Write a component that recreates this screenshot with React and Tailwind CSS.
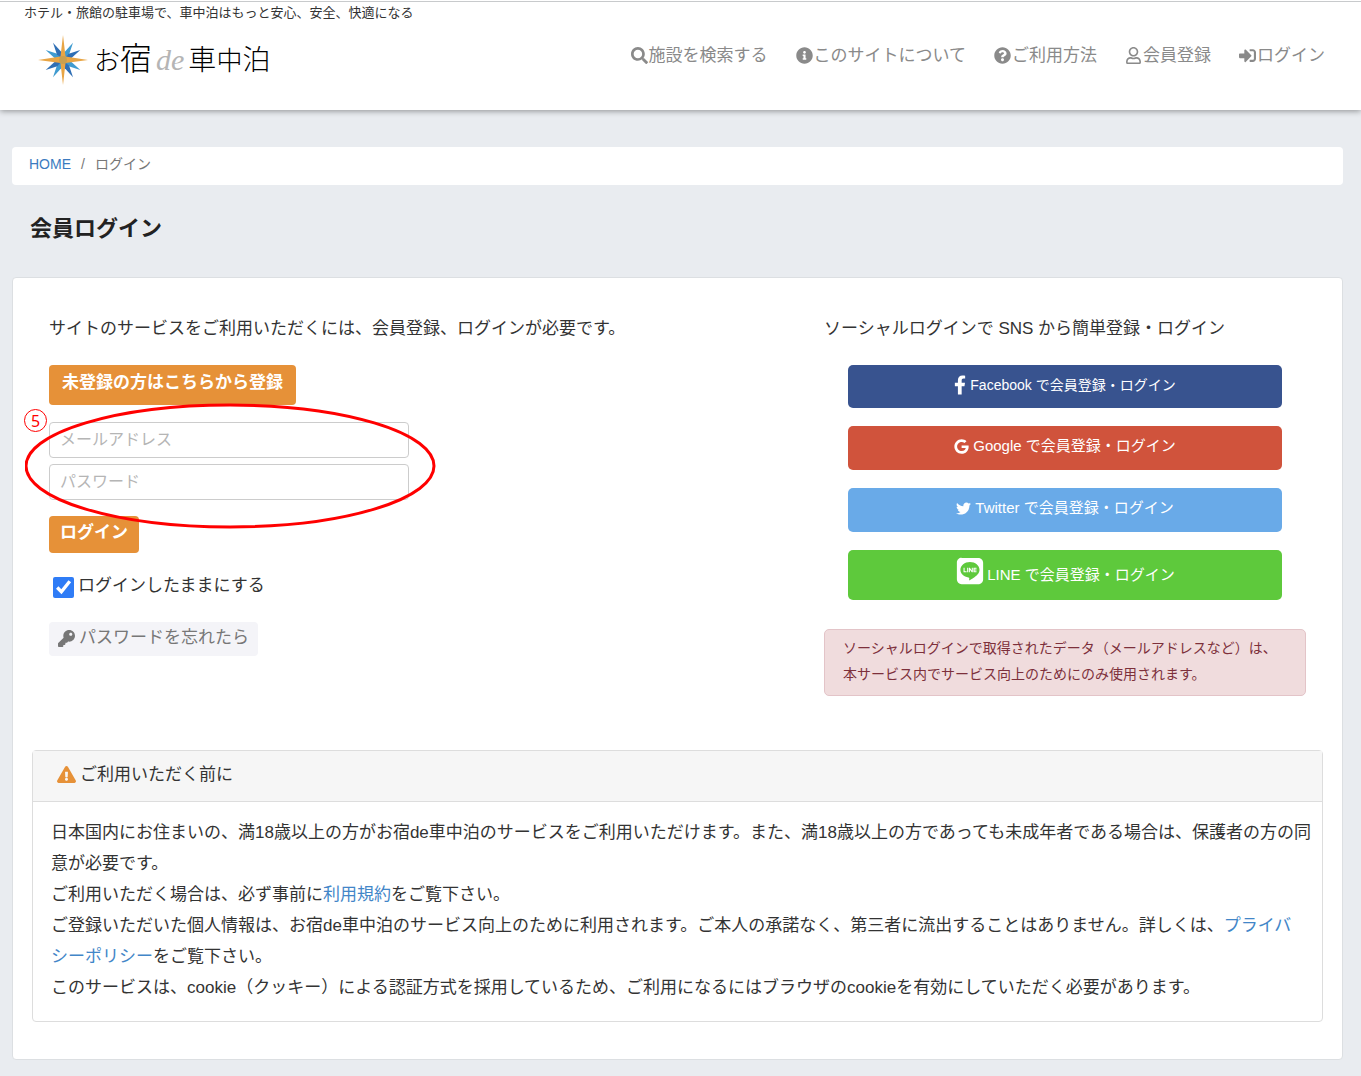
import React, { useState } from 'react';
import {
  FaExclamationTriangle,
  FaFacebookF,
  FaGoogle,
  FaInfoCircle,
  FaKey,
  FaLine,
  FaQuestionCircle,
  FaRegUser,
  FaSearch,
  FaSignInAlt,
  FaTwitter,
} from 'react-icons/fa';

const navItems = [
  { label: '施設を検索する', icon: <FaSearch /> },
  { label: 'このサイトについて', icon: <FaInfoCircle /> },
  { label: 'ご利用方法', icon: <FaQuestionCircle /> },
  { label: '会員登録', icon: <FaRegUser /> },
  { label: 'ログイン', icon: <FaSignInAlt /> },
];

const socials = [
  { name: 'Facebook', icon: <FaFacebookF className="h-5 w-3" />, style: 'h-[43px] bg-[#38538f] pb-1 text-sm' },
  { name: 'Google', icon: <FaGoogle className="size-[15px]" />, style: 'h-11 bg-[#d0533c] pb-1 text-[15px]' },
  { name: 'Twitter', icon: <FaTwitter className="size-[15px]" />, style: 'h-11 bg-[#69aae8] pb-1 text-[15px]' },
  { name: 'LINE', icon: <FaLine className="-mr-0.5 mb-2 size-[30px]" />, style: 'h-[50px] bg-[#5ec93c] text-[15px]' },
];

function Star() {
  return (
    <svg className="h-[50px] w-[50px]" viewBox="0 0 50 50" aria-hidden="true">
      {[30, 60, 120, 150, 210, 240, 300, 330].map((deg, i) => (
        <path
          key={deg}
          d="M25 5 L27.500 17 L25 25 L22.500 17 Z"
          fill={i % 2 ? '#2f6fb5' : '#3f9bd0'}
          transform={`rotate(${deg} 25 25)`}
        />
      ))}
      <path
        d="M25 0 L27.500 21.500 L50 25 L27.500 28 L25 50 L22.500 28 L0 25 L22.500 21.500 Z"
        fill="#e8a545"
      />
      <circle cx="25" cy="25" r="4" fill="#c9a050" />
    </svg>
  );
}

function Header() {
  return (
    <header className="relative bg-white pt-px shadow-[0_1px_6px_rgba(0,0,0,0.4)]">
      <p className="border-t border-[#c8cacc] pl-6 text-[13px] leading-[22px] text-[#333]">
        ホテル・旅館の駐車場で、車中泊はもっと安心、安全、快適になる
      </p>
      <div className="flex items-start justify-between pt-[11px] pr-9 pb-[25px] pl-[38px]">
        <a href="#" className="flex h-[50px] items-center gap-1.5 text-black">
          <Star />
          <span className="flex items-baseline font-light leading-[50px]">
            <span className="text-[26px]">お</span>
            <span className="text-[32px]">宿</span>
            <span className="px-1 font-['Liberation_Serif',serif] text-[30px] font-normal text-[#b5b5b5] italic">
              de
            </span>
            <span className="text-[28px]">車</span>
            <span className="text-[26px]">中</span>
            <span className="text-[28px]">泊</span>
          </span>
        </a>
        <nav className="mt-[9px] flex gap-7">
          {navItems.map((item) => (
            <a
              key={item.label}
              href="#"
              className="flex items-center gap-px text-[17px] leading-6 text-[#8a8a8a]"
            >
              <span className="pb-px">{item.icon}</span>
              {item.label}
            </a>
          ))}
        </nav>
      </div>
    </header>
  );
}

function LoginForm() {
  const [keep, setKeep] = useState(true);

  return (
    <div>
      <p className="leading-6">サイトのサービスをご利用いただくには、会員登録、ログインが必要です。</p>
      <button
        type="button"
        className="mt-6 h-10 rounded bg-[#e69138] px-[13px] pb-1 font-bold text-white"
      >
        未登録の方はこちらから登録
      </button>

      <form className="relative mt-[17px]" onSubmit={(e) => e.preventDefault()}>
        <div className="flex w-[360px] flex-col gap-1.5">
          <input
            type="email"
            aria-label="メールアドレス"
            placeholder="メールアドレス"
            className="h-9 rounded-sm border border-[#ccc] px-2.5 text-base placeholder:text-[#b5b5b5]"
          />
          <input
            type="password"
            aria-label="パスワード"
            placeholder="パスワード"
            className="h-9 rounded-sm border border-[#ccc] px-2.5 text-base placeholder:text-[#b5b5b5]"
          />
        </div>
        <button
          type="submit"
          className="mt-4 block h-[37px] rounded bg-[#e69138] px-[11px] pb-1 font-bold text-white"
        >
          ログイン
        </button>

        {/* callout marker */}
        <svg
          className="pointer-events-none absolute -top-5 -left-6 h-[128px] w-[412px]"
          viewBox="0 0 412 128"
          fill="none"
          aria-hidden="true"
        >
          <ellipse cx="205" cy="64" rx="204" ry="61" stroke="#f00" strokeWidth="3" />
        </svg>
        <span className="absolute -top-[13px] -left-[25px] flex size-[23px] items-center justify-center rounded-full border border-[#f00] font-['Noto_Sans',sans-serif] text-base text-[#f00]">
          5
        </span>
      </form>

      <label className="mt-5 ml-1 flex items-center gap-1 leading-6">
        <input
          type="checkbox"
          checked={keep}
          onChange={(e) => setKeep(e.target.checked)}
          className="mt-1 size-[21px] accent-[#2f7cf6]"
        />
        ログインしたままにする
      </label>
      <a
        href="#"
        className="mt-6 inline-flex h-[34px] items-center gap-1 rounded-sm bg-[#f4f4f8] px-[9px] pb-0.5 text-[#777]"
      >
        <FaKey />
        パスワードを忘れたら
      </a>
    </div>
  );
}

function SocialLogin() {
  return (
    <div>
      <p className="leading-6">ソーシャルログインで SNS から簡単登録・ログイン</p>
      <div className="mx-6 mt-6 flex flex-col gap-[18px]">
        {socials.map((s) => (
          <button
            key={s.name}
            type="button"
            className={`flex items-center justify-center gap-1 rounded-[5px] text-white ${s.style}`}
          >
            {s.icon}
            {s.name} で会員登録・ログイン
          </button>
        ))}
      </div>
      <p className="mt-[29px] rounded-[5px] border border-[#e3c4c8] bg-[#f0dcdd] px-[18px] pt-[5px] pb-2 text-sm leading-[26px] text-[#7d303b]">
        ソーシャルログインで取得されたデータ（メールアドレスなど）は、
        本サービス内でサービス向上のためにのみ使用されます。
      </p>
    </div>
  );
}

function Notice() {
  return (
    <section className="mx-[19px] rounded border border-[#ddd]">
      <h2 className="flex items-center gap-1 border-b border-[#ddd] bg-[#f6f6f6] px-6 pt-2 pb-[11px] leading-[31px]">
        <FaExclamationTriangle className="size-[19px] text-[#e69138]" />
        ご利用いただく前に
      </h2>
      <div className="pt-[15px] pr-1 pb-[18px] pl-[18px] leading-[31px] [line-break:strict]">
        <p>
          日本国内にお住まいの、満18歳以上の方がお宿de車中泊のサービスをご利用いただけます。また、満18歳以上の方であっても未成年者である場合は、保護者の方の同意が必要です。
        </p>
        <p>
          ご利用いただく場合は、必ず事前に
          <a href="#" className="text-[#4286c8]">利用規約</a>
          をご覧下さい。
        </p>
        <p>
          ご登録いただいた個人情報は、お宿de車中泊のサービス向上のために利用されます。ご本人の承諾なく、第三者に流出することはありません。詳しくは、
          <a href="#" className="text-[#4286c8]">プライバシーポリシー</a>
          をご覧下さい。
        </p>
        <p>
          このサービスは、cookie（クッキー）による認証方式を採用しているため、ご利用になるにはブラウザのcookieを有効にしていただく必要があります。
        </p>
      </div>
    </section>
  );
}

function App() {
  return (
    <div
      lang="ja"
      className="min-h-screen bg-[#e9ecf0] font-['Liberation_Sans','Noto_Sans_CJK_JP',sans-serif] text-[17px] text-[#333]"
    >
      <Header />
      <main className="pt-[37px] pr-[18px] pb-[17px] pl-3">
        <nav className="flex gap-2.5 rounded bg-white px-[17px] pt-1.5 pb-2.5 text-sm leading-[22px] text-[#777]">
          <a href="#" className="text-[#3b7bbf]">HOME</a>
          <span>/</span>
          <span>ログイン</span>
        </nav>
        <h1 className="mt-7 mb-8 ml-[18px] text-[22px] leading-8 font-bold text-[#222]">
          会員ログイン
        </h1>
        <div className="rounded border border-[#dcdfe2] bg-white pt-[39px] pb-[37px]">
          <div className="mb-[54px] grid grid-cols-[minmax(0,1fr)_482px] px-9">
            <LoginForm />
            <SocialLogin />
          </div>
          <Notice />
        </div>
      </main>
    </div>
  );
}

export default App;
